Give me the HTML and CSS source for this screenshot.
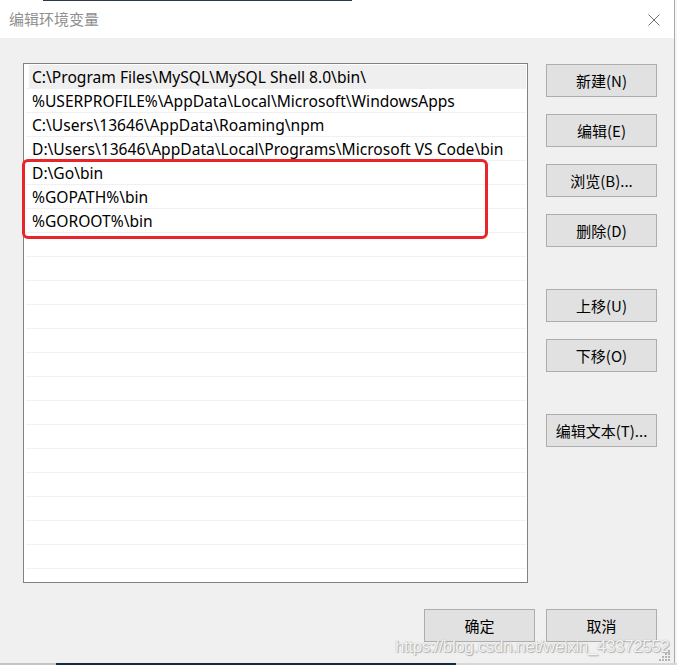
FILE: index.html
```html
<!DOCTYPE html>
<html lang="zh-CN">
<head>
<meta charset="utf-8">
<title>编辑环境变量</title>
<link rel="stylesheet" href="styles.css">
</head>
<body>
<div class="screen">
  <div class="edge-top"></div>
  <div class="dialog">
    <div class="titlebar">
      <span class="title">编辑环境变量</span>
      <svg class="close" width="12" height="12" viewBox="0 0 12 12"><path d="M0.5 0.5 L11.5 11.5 M11.5 0.5 L0.5 11.5" stroke="#6f6f6f" stroke-width="1" fill="none"/></svg>
    </div>
    <div class="content">
      <div class="main">
        <div class="list-wrap">
          <div class="list">
            <div class="row selected">C:\Program Files\MySQL\MySQL Shell 8.0\bin\</div>
            <div class="row">%USERPROFILE%\AppData\Local\Microsoft\WindowsApps</div>
            <div class="row">C:\Users\13646\AppData\Roaming\npm</div>
            <div class="row">D:\Users\13646\AppData\Local\Programs\Microsoft VS Code\bin</div>
            <div class="row">D:\Go\bin</div>
            <div class="row">%GOPATH%\bin</div>
            <div class="row">%GOROOT%\bin</div>
            <div class="row"></div><div class="row"></div><div class="row"></div><div class="row"></div>
            <div class="row"></div><div class="row"></div><div class="row"></div><div class="row"></div>
            <div class="row"></div><div class="row"></div><div class="row"></div><div class="row"></div>
            <div class="row"></div><div class="row"></div><div class="row"></div>
          </div>
          <div class="mark"></div>
        </div>
        <div class="side">
          <div class="group">
            <button class="btn">新建(N)</button>
            <button class="btn">编辑(E)</button>
            <button class="btn">浏览(B)...</button>
            <button class="btn">删除(D)</button>
          </div>
          <div class="group">
            <button class="btn">上移(U)</button>
            <button class="btn">下移(O)</button>
          </div>
          <div class="group">
            <button class="btn">编辑文本(T)...</button>
          </div>
        </div>
      </div>
      <div class="footer">
        <button class="btn">确定</button>
        <button class="btn">取消</button>
      </div>
    </div>
    <div class="watermark">https://blog.csdn.net/weixin_43372552</div>
    <svg class="grip" width="12" height="12" viewBox="0 0 12 12">
      <rect x="9" y="0" width="2" height="2" fill="#b4b4b4"/>
      <rect x="6" y="3" width="2" height="2" fill="#b4b4b4"/>
      <rect x="9" y="3" width="2" height="2" fill="#b4b4b4"/>
      <rect x="3" y="6" width="2" height="2" fill="#b4b4b4"/>
      <rect x="6" y="6" width="2" height="2" fill="#b4b4b4"/>
      <rect x="9" y="6" width="2" height="2" fill="#b4b4b4"/>
      <rect x="0" y="9" width="2" height="2" fill="#b4b4b4"/>
      <rect x="3" y="9" width="2" height="2" fill="#b4b4b4"/>
      <rect x="6" y="9" width="2" height="2" fill="#b4b4b4"/>
      <rect x="9" y="9" width="2" height="2" fill="#b4b4b4"/>
    </svg>
  </div>
  <div class="taskbar"><span class="tb-light"></span><span class="tb-dark"></span></div>
</div>
</body>
</html>
```
FILE: styles.css
```css
html, body {
  margin: 0;
  padding: 0;
  background: #f5f5f5;
}
body {
  width: 677px;
  height: 665px;
  overflow: hidden;
  font-family: "Noto Sans", "Noto Sans CJK SC", sans-serif;
}
.screen {
  position: relative;
  width: 677px;
  height: 665px;
}
.edge-top {
  position: absolute;
  left: 43px;
  top: 0;
  width: 309px;
  height: 1px;
  background: #2a3a4c;
  z-index: 5;
}
.dialog {
  position: relative;
  width: 674px;
  height: 663px;
  border-right: 1px solid #a9a9a9;
  background: #f0f0f0;
}
.titlebar {
  height: 38px;
  background: #ffffff;
  display: flex;
  align-items: center;
  justify-content: space-between;
  padding: 0 14px 0 9px;
}
.title {
  font-family: "Noto Sans CJK SC", sans-serif;
  font-size: 15px;
  color: #8f8f8f;
  line-height: 20px;
}
.close {
  display: block;
  margin-top: 1px;
}
.content {
  padding: 25px 17px 0 23px;
}
.main {
  display: flex;
  gap: 18px;
}
.list-wrap {
  position: relative;
  width: 505px;
  height: 520px;
}
.list {
  box-sizing: border-box;
  width: 505px;
  height: 520px;
  border: 1px solid #828282;
  background: #ffffff;
  padding: 1px 1px 0 2px;
  overflow: hidden;
}
.row {
  box-sizing: border-box;
  height: 24px;
  border-bottom: 1px solid #f0f0f0;
  padding: 1px 0 0 6px;
  font-size: 15.6px;
  line-height: 22px;
  color: #000000;
  white-space: nowrap;
}
.row.selected {
  background: linear-gradient(to right, #ffffff 0, #ffffff 3px, #efefef 3px);
}
.mark {
  position: absolute;
  left: -1px;
  top: 96px;
  width: 466px;
  height: 80px;
  box-sizing: border-box;
  border: 3px solid #e8262a;
  border-radius: 6px;
}
.side {
  width: 111px;
  padding-top: 1px;
  display: flex;
  flex-direction: column;
  gap: 42px;
}
.group {
  display: flex;
  flex-direction: column;
  gap: 17px;
}
.btn {
  box-sizing: border-box;
  width: 111px;
  height: 33px;
  margin: 0;
  padding: 0;
  background: #e1e1e1;
  border: 1px solid #adadad;
  border-radius: 0;
  font-family: "Noto Sans CJK SC", sans-serif;
  font-size: 15px;
  line-height: 20px;
  color: #000000;
}
.footer {
  display: flex;
  justify-content: flex-end;
  gap: 11px;
  margin-top: 26px;
}
.watermark {
  position: absolute;
  left: 395px;
  top: 639px;
  font-family: "Liberation Sans", Arial, sans-serif;
  font-size: 17px;
  line-height: 16px;
  color: rgba(255, 255, 255, 0.9);
  text-shadow: 0 0 1px #9a9a9a, 1px 1px 1px #b0b0b0;
  white-space: nowrap;
  letter-spacing: -0.4px;
}
.grip {
  position: absolute;
  right: 3px;
  bottom: 1px;
}
.taskbar {
  display: flex;
  height: 2px;
  background: #d8d8d8;
}
.tb-light {
  width: 56px;
  background: #c4c4c4;
}
.tb-dark {
  width: 400px;
  background: #17283f;
}
```
